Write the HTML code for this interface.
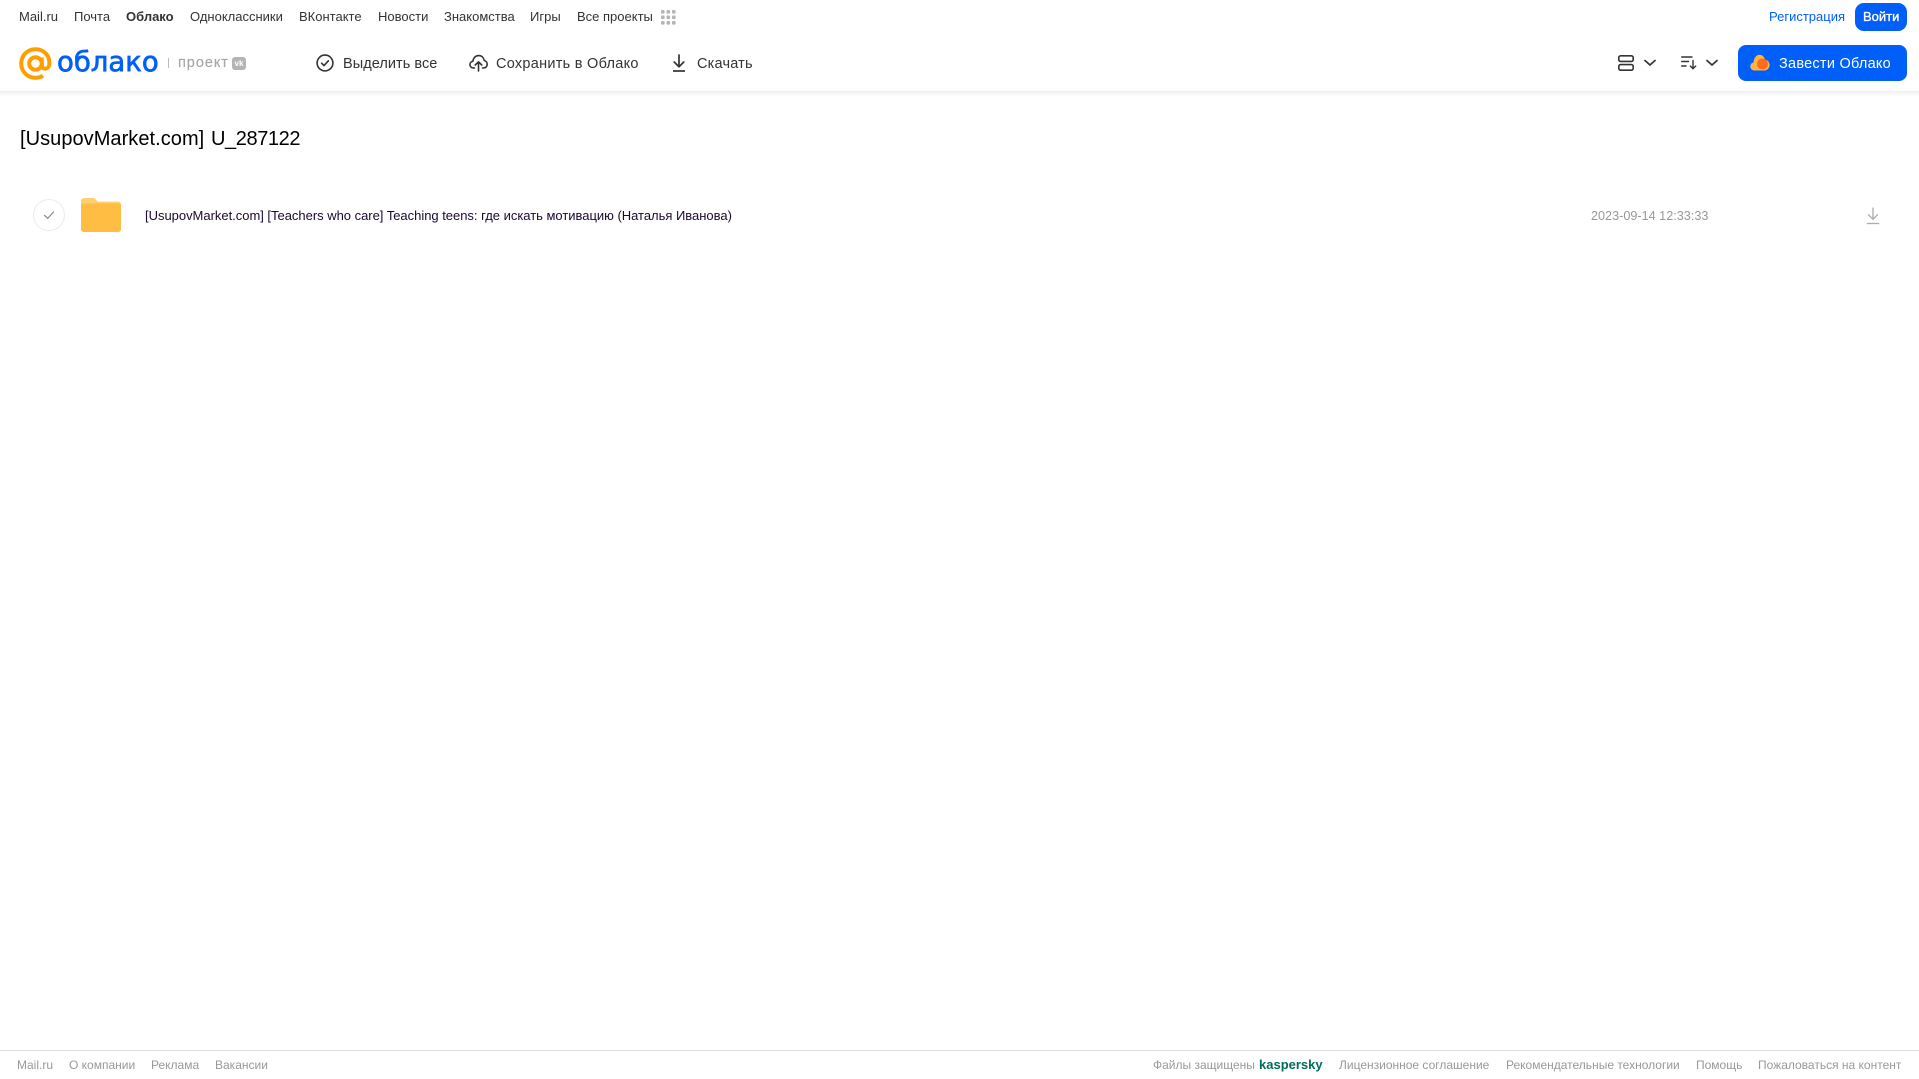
<!DOCTYPE html>
<html lang="ru">
<head>
<meta charset="utf-8">
<title>Облако</title>
<style>
html,body{margin:0;padding:0;background:#fff;}
body{width:1919px;height:1079px;position:relative;overflow:hidden;font-family:"Liberation Sans",sans-serif;}
.t{position:absolute;white-space:nowrap;line-height:20px;height:20px;}
.n{top:7px;font-size:13px;color:#333;}
.b{top:54px;font-size:14.5px;color:#333;}
.f{top:1055px;font-size:12px;color:#999;}
svg{position:absolute;overflow:visible;}
#sh{position:absolute;left:0;top:91px;width:1919px;height:6px;background:linear-gradient(#f1f1f1,#fff);}
</style>
</head>
<body>
<div id="sh"></div>

<span class="t n" style="left:19px">Mail.ru</span>
<span class="t n" style="left:74px">Почта</span>
<span class="t n" style="left:126px;font-weight:bold">Облако</span>
<span class="t n" style="left:190px">Одноклассники</span>
<span class="t n" style="left:299px">ВКонтакте</span>
<span class="t n" style="left:378px">Новости</span>
<span class="t n" style="left:444px">Знакомства</span>
<span class="t n" style="left:530px">Игры</span>
<span class="t n" style="left:577px">Все проекты</span>
<svg style="left:661px;top:10px" width="15" height="15" viewBox="0 0 15 15" fill="#b5b5b5">
<rect x="0" y="0" width="3.6" height="3.6" rx="1"/><rect x="5.5" y="0" width="3.6" height="3.6" rx="1"/><rect x="11" y="0" width="3.6" height="3.6" rx="1"/>
<rect x="0" y="5.5" width="3.6" height="3.6" rx="1"/><rect x="5.5" y="5.5" width="3.6" height="3.6" rx="1"/><rect x="11" y="5.5" width="3.6" height="3.6" rx="1"/>
<rect x="0" y="11" width="3.6" height="3.6" rx="1"/><rect x="5.5" y="11" width="3.6" height="3.6" rx="1"/><rect x="11" y="11" width="3.6" height="3.6" rx="1"/>
</svg>

<span class="t" style="left:1769px;top:7px;font-size:13px;color:#005ff9">Регистрация</span>
<div style="position:absolute;left:1855px;top:3px;width:52px;height:28px;border-radius:9px;background:#005ff9"></div>
<span class="t" style="left:1863px;top:7px;font-size:13px;color:#fff;-webkit-text-stroke:.35px #fff">Войти</span>

<!-- logo -->
<svg style="left:19px;top:47px" width="33" height="33" viewBox="0 0 33 33" fill="none" stroke="#ff9e00" stroke-width="4">
<circle cx="16.5" cy="16.5" r="6.3"/>
<path d="M22.8 10.5V18.5C22.8 23 29.8 23 30.3 17.5C31.2 8.5 24.8 2.2 16.5 2.2C8.5 2.2 2.2 8.5 2.2 16.5C2.2 24.5 8.5 30.8 16.5 30.8C19.5 30.8 22 30 24 28.7"/>
</svg>
<span class="t" style="left:57px;top:45px;height:34px;line-height:34px;font-family:'DejaVu Sans','Liberation Sans',sans-serif;font-size:27.5px;color:#005ff9;-webkit-text-stroke:.7px #005ff9">облако</span>
<div style="position:absolute;left:168px;top:58px;width:1px;height:10px;background:#bbb"></div>
<span class="t" style="left:178px;top:53px;font-size:14.5px;color:#a6a6a6;letter-spacing:.95px;-webkit-text-stroke:.15px #a6a6a6">проект</span>
<div style="position:absolute;left:232px;top:57px;width:14px;height:13px;border-radius:3px;background:#b4b4b4;color:#fff;font:bold 8px/13px 'Liberation Sans',sans-serif;text-align:center">vk</div>

<!-- toolbar -->
<svg style="left:316px;top:54px" width="18" height="18" viewBox="0 0 18 18" fill="none" stroke="#333" stroke-width="1.6">
<circle cx="9" cy="9" r="7.9"/><path d="M5.6 9.2L8 11.6L12.4 6.8" stroke-linecap="round" stroke-linejoin="round"/>
</svg>
<span class="t b" style="left:343px;letter-spacing:.05px">Выделить все</span>

<svg style="left:469px;top:54px" width="19" height="18" viewBox="0 0 19 18" fill="none" stroke="#333" stroke-width="1.6" stroke-linecap="round" stroke-linejoin="round">
<path d="M5.5 14H4.5C2.3 14 .9 12.4 .9 10.6C.9 8.9 2.2 7.5 3.9 7.3C4.3 4 6.5 1.6 9.6 1.6C12.6 1.6 14.7 3.7 15.2 6.5C17 6.9 18.2 8.4 18.2 10.2C18.2 12.3 16.6 14 14.5 14H13.5"/>
<path d="M9.5 17V8M6.2 11L9.5 7.8L12.8 11"/>
</svg>
<span class="t b" style="left:496px;letter-spacing:.27px">Сохранить в Облако</span>

<svg style="left:672px;top:54px" width="14" height="18" viewBox="0 0 14 18" fill="none" stroke="#333" stroke-width="1.7" stroke-linecap="round" stroke-linejoin="round">
<path d="M7 1V12.5M2.2 8L7 12.8L11.800 8"/><path d="M1 17H13" stroke-linecap="butt"/>
</svg>
<span class="t b" style="left:697px;letter-spacing:.2px">Скачать</span>

<!-- right controls -->
<svg style="left:1618px;top:55px" width="16" height="16" viewBox="0 0 16 16" fill="none" stroke="#333" stroke-width="1.6">
<rect x=".8" y=".8" width="14.4" height="5.6" rx="1.8"/><rect x=".8" y="9.6" width="14.4" height="5.6" rx="1.8"/>
</svg>
<svg style="left:1644px;top:59px" width="12" height="8" viewBox="0 0 12 8" fill="none" stroke="#333" stroke-width="1.7" stroke-linecap="round" stroke-linejoin="round"><path d="M1 1.5L6 6L11 1.5"/></svg>
<svg style="left:1681px;top:56px" width="16" height="14" viewBox="0 0 16 14" fill="none" stroke="#333" stroke-width="1.4" stroke-linecap="round" stroke-linejoin="round">
<path d="M.7 1H11M.7 5.5H7.5M.7 10H5"/><path d="M12 4.5V12.5M9.3 10L12 12.8L14.7 10"/>
</svg>
<svg style="left:1706px;top:59px" width="12" height="8" viewBox="0 0 12 8" fill="none" stroke="#333" stroke-width="1.7" stroke-linecap="round" stroke-linejoin="round"><path d="M1 1.5L6 6L11 1.5"/></svg>

<div style="position:absolute;left:1738px;top:45px;width:169px;height:36px;border-radius:8px;background:#005ff9"></div>
<svg style="left:1750px;top:54px" width="20" height="17" viewBox="0 0 20 17">
<path d="M4.5 16.5C2 16.5 .3 14.6 .3 12.4C.3 10.4 1.7 8.8 3.6 8.4C3.9 4 6.3 .8 9.5 .8C12.3 .8 14.2 2.8 15 5.6C17.6 6 19.6 8.2 19.6 11C19.6 14 17.3 16.5 14.3 16.5Z" fill="#ffb340"/>
<circle cx="12.5" cy="10" r="5.4" fill="#ff6a1f"/>
</svg>
<span class="t" style="left:1779px;top:54px;font-size:14.5px;color:#fff;letter-spacing:.25px">Завести Облако</span>

<!-- title -->
<span class="t" style="left:20px;top:125.5px;height:26px;line-height:26px;font-size:20px;color:#000;letter-spacing:.05px">[UsupovMarket.com]</span>
<span class="t" style="left:211px;top:125.5px;height:26px;line-height:26px;font-size:20px;color:#000;letter-spacing:-.4px">U_287122</span>

<!-- row -->
<svg style="left:33px;top:199px" width="32" height="32" viewBox="0 0 32 32" fill="none">
<circle cx="16" cy="16" r="15.5" stroke="#ececec"/>
<path d="M11.5 16.4L14.7 19.4L20.5 13" stroke="#8f8f8f" stroke-width="1.3" stroke-linecap="round" stroke-linejoin="round"/>
</svg>
<svg style="left:81px;top:198px" width="40" height="34" viewBox="0 0 40 34">
<path d="M0 3C0 1.3 1.3 0 3 0H12C14 0 14.5 1 15.5 2.2C16.3 3.2 17 3.6 18.5 3.6H37C38.700 3.600 40 4.900 40 6.600V31C40 32.700 38.700 34 37 34H3C1.300 34 0 32.700 0 31Z" fill="#ffd071"/>
<path d="M0 7.500C0 6.300 1 5.400 2.200 5.400H37.800C39 5.400 40 6.300 40 7.500V31C40 32.700 38.700 34 37 34H3C1.300 34 0 32.700 0 31Z" fill="#ffbe43"/>
</svg>
<span class="t" style="left:145px;top:206px;font-size:13px;color:#1a0a2e;letter-spacing:-.02px">[UsupovMarket.com] [Teachers who care] Teaching teens: где искать мотивацию (Наталья Иванова)</span>
<span class="t" style="left:1591px;top:206px;font-size:12.65px;color:#999">2023-09-14 12:33:33</span>
<svg style="left:1866px;top:207px" width="14" height="18" viewBox="0 0 14 18" fill="none" stroke="#aaa" stroke-width="1.3" stroke-linecap="round" stroke-linejoin="round">
<path d="M7 1V12M2.500 7.800L7 12.300L11.500 7.800"/><path d="M.8 16.500H13.200" stroke-linecap="butt"/>
</svg>

<!-- footer -->
<div style="position:absolute;left:0;top:1050px;width:1919px;height:1px;background:#ddd"></div>
<span class="t f" style="left:17px">Mail.ru</span>
<span class="t f" style="left:69px">О компании</span>
<span class="t f" style="left:151px">Реклама</span>
<span class="t f" style="left:215px">Вакансии</span>
<span class="t f" style="left:1153px">Файлы защищены</span>
<span class="t f" style="left:1259px;font-weight:bold;color:#006d5c;font-size:13px">kaspersky</span>
<span class="t f" style="left:1339px">Лицензионное соглашение</span>
<span class="t f" style="left:1506px">Рекомендательные технологии</span>
<span class="t f" style="left:1696px">Помощь</span>
<span class="t f" style="left:1758px">Пожаловаться на контент</span>
</body>
</html>
